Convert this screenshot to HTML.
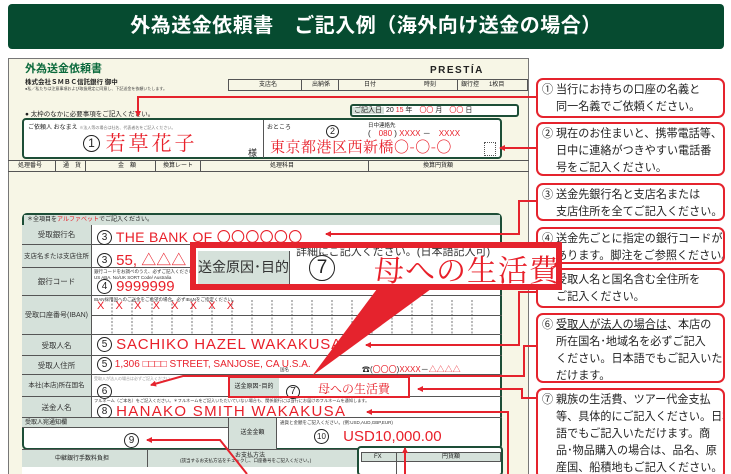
<!DOCTYPE html>
<html><head><meta charset="utf-8"><style>
*{margin:0;padding:0;box-sizing:border-box}
html,body{width:731px;height:474px;overflow:hidden}
body{background:#fff;position:relative;font-family:"Liberation Sans","Noto Sans CJK JP",sans-serif;color:#222}
.a{position:absolute;white-space:nowrap}
.title{left:8px;top:4px;width:716px;height:45px;background:#064b30;border-radius:4px;color:#fff;font-weight:bold;font-size:20px;text-align:center;line-height:45px;letter-spacing:0.5px}
.form{left:8px;top:58px;width:521px;height:420px;background:#f7f6e6;border:1px solid #777}
.cb{position:absolute;left:536px;width:189px;border:2.5px solid #e5232d;border-radius:7px;background:#fff;font-size:11.1px;line-height:17px;padding:2px 2px 0 4px;color:#222;white-space:nowrap;overflow:hidden}
.cb .i{display:inline-block;width:14px}
.lab{position:absolute;left:22px;width:70px;background:#d5e1da;border-right:1px solid #555;border-bottom:1px solid #555;font-size:7.5px;text-align:center;color:#333}
.row{position:absolute;left:22px;width:480px;border-bottom:1px solid #555}
.red{color:#e8202a}
.cir{display:inline-block;border:1.2px solid #222;border-radius:50%;text-align:center;color:#222}
.s{font-size:6px;color:#333}
</style></head><body>
<div class="a title">外為送金依頼書　ご記入例（海外向け送金の場合）</div>
<div class="a form"></div>
<div class="a" style="left:25px;top:60px;font-size:11px;font-weight:bold;color:#0b6a3c">外為送金依頼書</div>
<div class="a" style="left:25px;top:76px;font-size:6.5px;font-weight:bold">株式会社ＳＭＢＣ信託銀行 御中</div>
<div class="a" style="left:25px;top:86px;font-size:4px;color:#444">●私／私たちは注意事項および取扱規定に同意し、下記送金を依頼いたします。</div>
<div class="a" style="left:430px;top:65px;font-size:10px;font-weight:bold;letter-spacing:1.5px">PRESTÍA</div>
<div class="a" style="left:228px;top:79px;width:300px;height:12px;border:1px solid #555;font-size:6px;line-height:10px;background:#f7f6e6">
<span class="a" style="left:30px">支店名</span><span class="a" style="left:72px;border-left:1px solid #555;height:10px"></span><span class="a" style="left:83px">出納係</span><span class="a" style="left:109px;border-left:1px solid #555;height:10px"></span><span class="a" style="left:135px">日付</span><span class="a" style="left:195px">時刻</span><span class="a" style="left:228px;border-left:1px solid #555;height:10px"></span><span class="a" style="left:232px">銀行控</span><span class="a" style="left:260px">1枚目</span></div>
<div class="a" style="left:25px;top:108px;font-size:6.5px">● 太枠のなかに必要事項をご記入ください。</div>
<div class="a" style="left:350px;top:104px;width:169px;height:13px;border:2px solid #1d4e37;border-radius:3px;background:#fff;font-size:7px;line-height:9px"><span style="background:#d5e1da;padding:0 2px">ご記入日</span> 20 <span class="red">15</span> 年　<span class="red">〇〇</span> 月　<span class="red">〇〇</span> 日</div>
<div class="a" style="left:22px;top:118px;width:480px;height:41px;border:2.5px solid #1d4e37;border-radius:4px;background:#fff"></div>
<div class="a" style="left:263px;top:120px;height:38px;border-left:1px solid #555"></div>
<div class="a" style="left:28px;top:122px;font-size:6px">ご依頼人 おなまえ <span style="font-size:4px;color:#777">※法人等の場合は社名、代表者名をご記入ください。</span></div>
<div class="a" style="left:83px;top:130px;font-size:20px;line-height:24px"><span class="cir" style="width:17px;height:17px;font-size:12px;line-height:15px;vertical-align:3px">1</span> <span class="red" style="font-family:'Noto Serif CJK JP','Noto Serif CJK SC',serif;letter-spacing:3px">若草花子</span></div>
<div class="a" style="left:248px;top:146px;font-size:9px">様</div>
<div class="a" style="left:267px;top:122px;font-size:6px">おところ</div>
<div class="a" style="left:326px;top:121px"><span class="cir" style="width:13px;height:13px;font-size:9px;line-height:11px">2</span></div>
<div class="a" style="left:368px;top:121px;font-size:5.5px">日中連絡先</div>
<div class="a" style="left:368px;top:128px;font-size:8px">(　<span class="red">080</span> ) <span class="red">XXXX</span> －　<span class="red">XXXX</span></div>
<div class="a red" style="left:270px;top:136px;font-size:15px;font-family:'Noto Serif CJK JP','Noto Serif CJK SC',serif;letter-spacing:0.5px">東京都港区西新橋〇-〇-〇</div>
<div class="a" style="left:484px;top:142px;width:12px;height:14px;border:1px dotted #555"></div>
<div class="a" style="left:8px;top:160px;width:521px;height:12px;border-top:1px solid #555;border-bottom:1px solid #555;font-size:6px;line-height:10px">
<span class="a" style="left:10px">処理番号</span><span class="a" style="left:47px;border-left:1px solid #555;height:10px"></span><span class="a" style="left:55px">通　貨</span><span class="a" style="left:77px;border-left:1px solid #555;height:10px"></span><span class="a" style="left:110px">金　額</span><span class="a" style="left:147px;border-left:1px solid #555;height:10px"></span><span class="a" style="left:155px">換算レート</span><span class="a" style="left:192px;border-left:1px solid #555;height:10px"></span><span class="a" style="left:262px">処理科目</span><span class="a" style="left:360px;border-left:1px solid #555;height:10px"></span><span class="a" style="left:415px">換算円貨額</span></div>
<!-- section 2 -->
<div class="a" style="left:22px;top:213px;width:480px;height:237px;border:2.5px solid #1d4e37;border-radius:5px;background:#fff"></div>
<div class="a" style="left:24px;top:215px;width:476px;height:10px;background:#d5e1da;font-size:6px;line-height:10px;padding-left:3px">＊全項目を<span class="red">アルファベット</span>でご記入ください。</div>
<div class="lab" style="top:225px;height:20px;line-height:20px">受取銀行名</div>
<div class="lab" style="top:245px;height:23px;line-height:23px;font-size:6.5px">支店名または支店住所</div>
<div class="lab" style="top:268px;height:28px;line-height:28px">銀行コード</div>
<div class="lab" style="top:296px;height:39px;line-height:39px;font-size:7px">受取口座番号(IBAN)</div>
<div class="lab" style="top:335px;height:21px;line-height:21px">受取人名</div>
<div class="lab" style="top:356px;height:19px;line-height:19px">受取人住所</div>
<div class="lab" style="top:375px;height:22px;line-height:22px;font-size:6.5px">本社(本店)所在国名</div>
<div class="lab" style="top:397px;height:21px;line-height:21px">送金人名</div>
<div class="row" style="top:225px;height:20px"></div><div class="row" style="top:245px;height:23px"></div><div class="row" style="top:268px;height:28px"></div><div class="row" style="top:296px;height:39px"></div><div class="row" style="top:335px;height:21px"></div><div class="row" style="top:356px;height:19px"></div><div class="row" style="top:375px;height:22px"></div><div class="row" style="top:397px;height:21px"></div>
<div class="a" style="left:92px;top:315px;width:410px;border-top:1px solid #555"></div>
<svg class="a" style="left:92px;top:300px" width="410" height="35"><g stroke="#555" stroke-dasharray="2,1.5" stroke-width="0.8">
<line x1="20" y1="0" x2="20" y2="35"/><line x1="40" y1="0" x2="40" y2="35"/><line x1="60" y1="0" x2="60" y2="35"/><line x1="80" y1="0" x2="80" y2="35"/><line x1="100" y1="0" x2="100" y2="35"/><line x1="120" y1="0" x2="120" y2="35"/><line x1="140" y1="0" x2="140" y2="35"/><line x1="160" y1="0" x2="160" y2="35"/><line x1="180" y1="0" x2="180" y2="35"/><line x1="200" y1="0" x2="200" y2="35"/><line x1="220" y1="0" x2="220" y2="35"/><line x1="240" y1="0" x2="240" y2="35"/><line x1="260" y1="0" x2="260" y2="35"/><line x1="280" y1="0" x2="280" y2="35"/><line x1="300" y1="0" x2="300" y2="35"/><line x1="320" y1="0" x2="320" y2="35"/><line x1="340" y1="0" x2="340" y2="35"/><line x1="360" y1="0" x2="360" y2="35"/><line x1="380" y1="0" x2="380" y2="35"/></g></svg>
<div class="a red" style="left:97px;top:300px;font-size:11px;letter-spacing:11.2px">XXXXXXXX</div>
<div class="a" style="left:97px;top:227px;font-size:14px"><span class="cir" style="width:15px;height:15px;font-size:10px;line-height:13px;vertical-align:2px">3</span> <span class="red" style="letter-spacing:0.3px">THE BANK OF 〇〇〇〇〇〇</span></div>
<div class="a" style="left:97px;top:249px;font-size:15px"><span class="cir" style="width:15px;height:15px;font-size:10px;line-height:13px;vertical-align:2px">3</span> <span class="red">55, △△△</span></div>
<div class="a s" style="left:94px;top:269px;font-size:4.5px">銀行コードをお調べのうえ、必ずご記入ください<br>US ABA. No/UK SORT Code/ Australia</div>
<div class="a" style="left:97px;top:278px;font-size:15px"><span class="cir" style="width:15px;height:15px;font-size:10px;line-height:13px;vertical-align:2px">4</span> <span class="red">9999999</span></div>
<div class="a s" style="left:94px;top:297px;font-size:4.5px">IBAN採用国へのご送金をご希望の場合、必ずIBANをご指定ください。</div>
<div class="a" style="left:97px;top:336px;font-size:15px"><span class="cir" style="width:15px;height:15px;font-size:10px;line-height:13px;vertical-align:2px">5</span> <span class="red" style="letter-spacing:0.8px">SACHIKO HAZEL WAKAKUSA</span></div>
<div class="a" style="left:97px;top:357px;font-size:10px"><span class="cir" style="width:15px;height:15px;font-size:10px;line-height:13px">5</span> <span class="red">1,306 □□□□ STREET, SANJOSE, CA U.S.A.</span></div>
<div class="a s" style="left:280px;top:367px;font-size:4.5px">国名</div>
<div class="a" style="left:362px;top:364px;font-size:8px">☎(<span class="red">〇〇〇</span>)<span class="red">XXXX</span>－<span class="red">△△△△</span></div>
<div class="a s" style="left:94px;top:376px;font-size:4px;color:#999">受取人が法人の場合は必ずご記入ください。</div>
<div class="a" style="left:97px;top:381px"><span class="cir" style="width:15px;height:15px;font-size:10px;line-height:13px">6</span></div>
<div class="a" style="left:229px;top:377px;width:50px;height:20px;background:#d5e1da;font-size:6px;line-height:20px;text-align:center">送金原因･目的</div>
<div class="a" style="left:286px;top:381px"><span class="cir" style="width:14px;height:14px;font-size:10px;line-height:12px">7</span></div>
<div class="a red" style="left:318px;top:380px;font-size:12px;font-family:'Noto Serif CJK JP','Noto Serif CJK SC',serif">母への生活費</div>
<div class="a" style="left:228px;top:376px;width:182px;height:22px;border:2.5px solid #e5232d"></div>
<div class="a s" style="left:94px;top:398px;font-size:4.2px">フルネーム（ご本名）をご記入ください。＊フルネームをご記入いただいていない場合も、関係銀行には当行にお届けのフルネームを通知します。</div>
<div class="a" style="left:97px;top:403px;font-size:15px"><span class="cir" style="width:15px;height:15px;font-size:10px;line-height:13px;vertical-align:2px">8</span> <span class="red" style="letter-spacing:1.3px">HANAKO SMITH WAKAKUSA</span></div>
<div class="a" style="left:22px;top:418px;width:207px;height:10px;background:#d5e1da;font-size:6px;line-height:10px;padding-left:3px;border-bottom:1px solid #555">受取人宛通知欄</div>
<div class="a" style="left:228px;top:418px;width:49px;height:31px;background:#d5e1da;border-left:1px solid #555;border-right:1px solid #555;font-size:6px;line-height:31px;text-align:center">送金金額</div>
<div class="a s" style="left:280px;top:420px;font-size:4.5px">通貨と金額をご記入ください。(例:USD,AUD,GBP,EUR)</div>
<div class="a" style="left:124px;top:430px"><span class="cir" style="width:15px;height:15px;font-size:10px;line-height:13px">9</span></div>
<div class="a" style="left:314px;top:428px;font-size:15px"><span class="cir" style="width:15px;height:15px;font-size:8px;line-height:13px;vertical-align:2px">10</span> <span class="red" style="margin-left:10px">USD10,000.00</span></div>
<div class="a" style="left:22px;top:449px;width:335px;height:25px;background:#d5e1da;border-top:1px solid #555"></div>
<div class="a" style="left:147px;top:449px;height:25px;border-left:1px solid #555"></div>
<div class="a" style="left:55px;top:453px;font-size:6px">中継銀行手数料負担</div>
<div class="a" style="left:235px;top:450px;font-size:6px">お支払方法</div>
<div class="a" style="left:180px;top:458px;font-size:4.5px">(該当するお支払方法をチェックし、口座番号をご記入ください。)</div>
<div class="a" style="left:22px;top:467px;width:335px;height:7px;background:#fff"></div>
<div class="a" style="left:357px;top:446px;width:146px;height:30px;border:2.5px solid #1d4e37;border-radius:4px;background:#fff"></div>
<div class="a" style="left:361px;top:452px;width:140px;height:10px;border:1px solid #555;background:#d5e1da;font-size:6px;line-height:8px"><span class="a" style="left:12px">FX</span><span class="a" style="left:34px;border-left:1px solid #555;height:22px"></span><span class="a" style="left:80px">円貨額</span></div>
<!-- arrows -->
<svg class="a" style="left:0;top:0" width="731" height="474"><defs><marker id="m" markerWidth="6" markerHeight="6" refX="5" refY="3" orient="auto" markerUnits="userSpaceOnUse"><path d="M0,0 L6,3 L0,6z" fill="#e5232d"/></marker></defs>
<g fill="none" stroke="#e5232d" stroke-width="2">
<path d="M536,97 H138 V116" marker-end="url(#m)"/>
<path d="M536,148 H500" marker-end="url(#m)"/>
<path d="M536,201 H519 V234 H326" marker-end="url(#m)"/>
<path d="M536,292 H519 V345 H366" marker-end="url(#m)"/>
<path d="M536,346 H524 V376 H183 L151,385" marker-end="url(#m)"/>
<path d="M536,398 H522 V389 H418" marker-end="url(#m)"/>
<path d="M508,474 V412 H367" marker-end="url(#m)"/>
<path d="M405,474 V448" marker-end="url(#m)"/>
<path d="M247,474 L220,440 H147" marker-end="url(#m)"/>
</g>
<polygon points="377,289 431,289 312,376" fill="#e5232d"/>
</svg>
<!-- right callouts -->
<div class="cb" style="top:78px;height:40px"><span class="i">①</span>当行にお持ちの口座の名義と<br><span class="i"></span>同一名義でご依頼ください。</div>
<div class="cb" style="top:122px;height:54px"><span class="i">②</span>現在のお住まいと、携帯電話等、<br><span class="i"></span>日中に連絡がつきやすい電話番<br><span class="i"></span>号をご記入ください。</div>
<div class="cb" style="top:183px;height:38px"><span class="i">③</span>送金先銀行名と支店名または<br><span class="i"></span>支店住所を全てご記入ください。</div>
<div class="cb" style="top:227px;height:37px"><span class="i">④</span>送金先ごとに指定の銀行コードが<br><span class="i"></span>あります。脚注をご参照ください。</div>
<div class="cb" style="top:268px;height:40px"><span class="i">⑤</span>受取人名と国名含む全住所を<br><span class="i"></span>ご記入ください。</div>
<div class="cb" style="top:313px;height:70px"><span class="i">⑥</span><u>受取人が法人の場合は</u>、本店の<br><span class="i"></span>所在国名･地域名を必ずご記入<br><span class="i"></span>ください。日本語でもご記入いた<br><span class="i"></span>だけます。</div>
<div class="cb" style="top:388px;height:92px"><span class="i">⑦</span>親族の生活費、ツアー代金支払<br><span class="i"></span>等、具体的にご記入ください。日本<br><span class="i"></span>語でもご記入いただけます。商<br><span class="i"></span>品･物品購入の場合は、品名、原<br><span class="i"></span>産国、船積地もご記入ください。</div>
<!-- big callout -->
<div class="a" style="left:190px;top:242px;width:372px;height:48px;border:6px solid #e5232d;background:#fff;overflow:hidden">
<div class="a" style="left:2px;top:3px;width:92px;height:33px;background:#d5e1da;border-right:1px solid #555;font-size:14px;line-height:33px;text-align:center;color:#333">送金原因･目的</div>
<div class="a" style="left:100px;top:-5px;font-size:11px;color:#333">詳細にご記入ください。(日本語記入可)</div>
<div class="a" style="left:113px;top:7px;width:26px;height:26px;border:1.5px solid #222;border-radius:50%;font-size:19px;line-height:23px;text-align:center">7</div>
<div class="a red" style="left:178px;top:-2px;font-size:30px;letter-spacing:1px;font-family:'Noto Serif CJK JP','Noto Serif CJK SC',serif">母への生活費</div>
</div>
</body></html>
